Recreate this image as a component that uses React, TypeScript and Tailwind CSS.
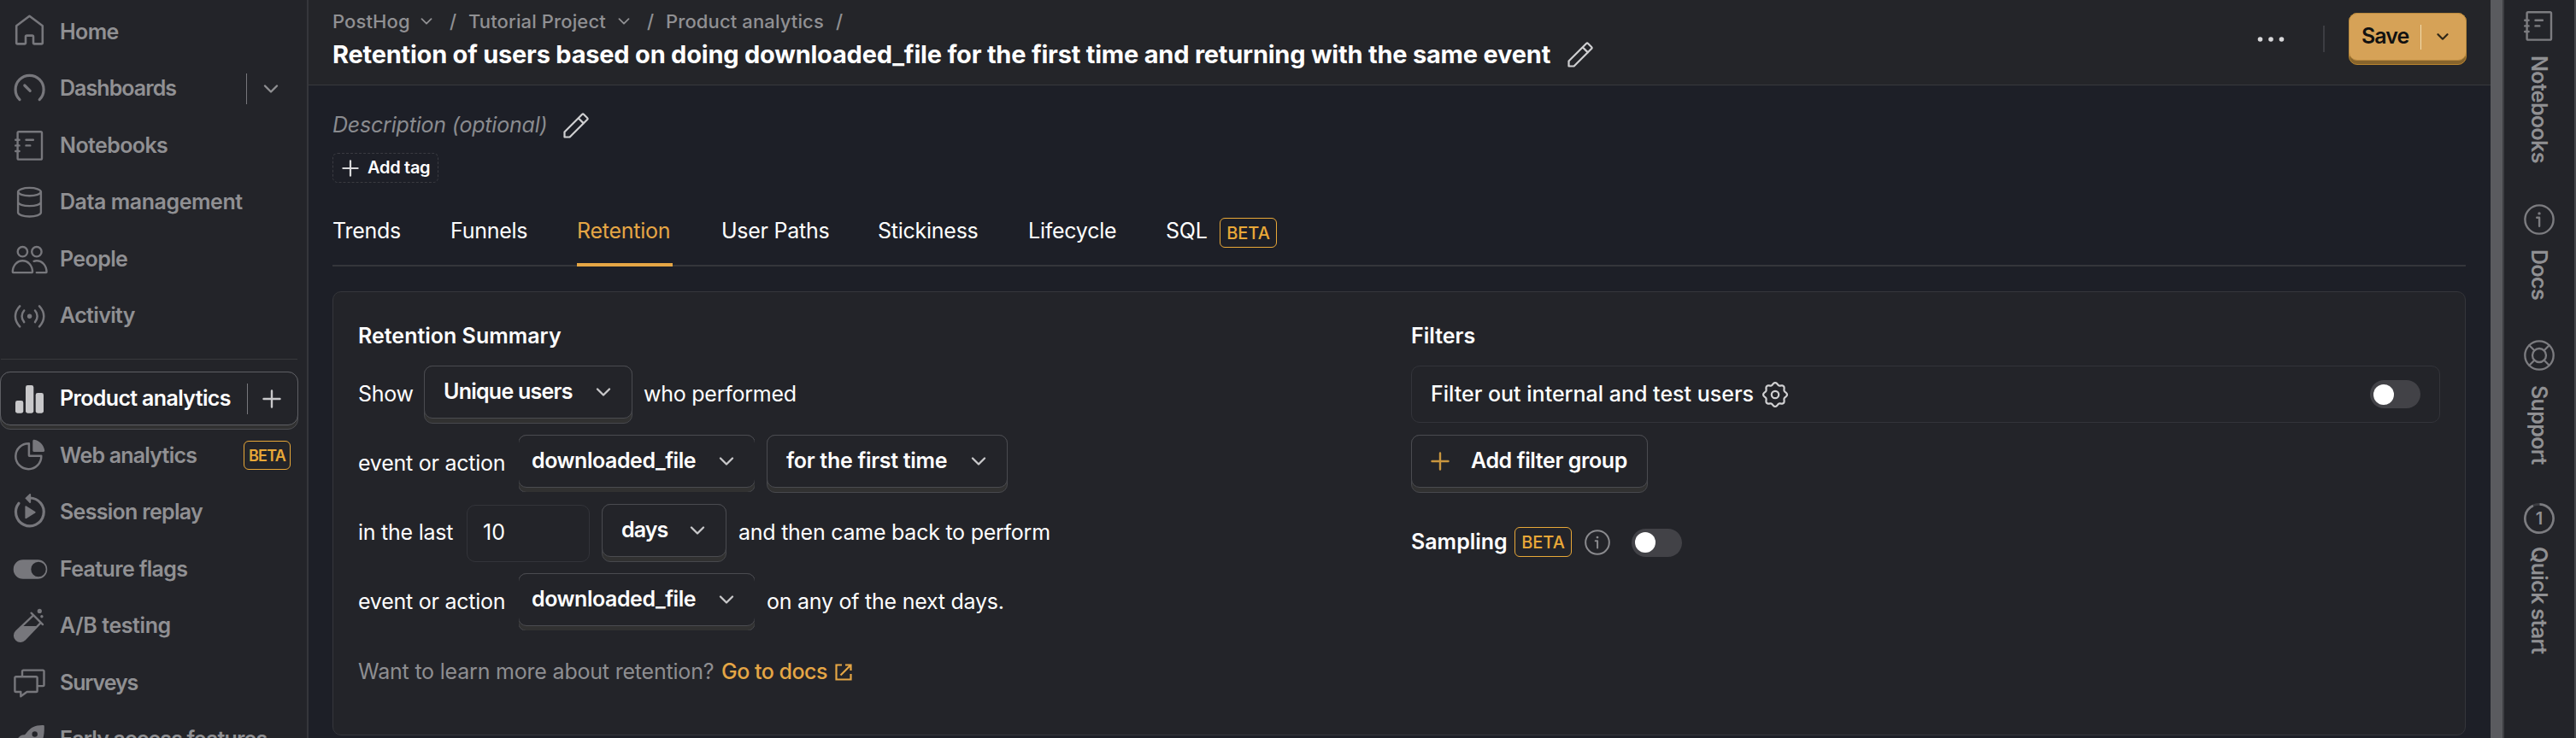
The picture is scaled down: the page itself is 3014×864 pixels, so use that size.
import React from 'react'

const NAV_ICON = 'h-[42px] w-[42px] shrink-0 overflow-visible'

function Svg({ children, className = NAV_ICON, w = 42, h = 42, sw = 2.6 }: { children: React.ReactNode; className?: string; w?: number; h?: number; sw?: number }) {
  return (
    <svg viewBox={`0 0 ${w} ${h}`} className={className} fill="none" stroke="currentColor" strokeWidth={sw} strokeLinecap="round" strokeLinejoin="round">
      {children}
    </svg>
  )
}

const HomeIcon = () => (
  <Svg><path d="M20.5 2.8 5.2 14.2V34a1.4 1.4 0 0 0 1.4 1.4h8a1.4 1.4 0 0 0 1.4-1.4v-7a1.4 1.4 0 0 1 1.4-1.4h6.2a1.4 1.4 0 0 1 1.4 1.4v7a1.4 1.4 0 0 0 1.4 1.4h8a1.4 1.4 0 0 0 1.4-1.4V14.2Z" /></Svg>
)
const GaugeIcon = () => (
  <Svg sw={3}><path d="M9 33.6a16.5 16.5 0 1 1 23.2 0M14.8 17l6.4 6.4" strokeWidth="3.2" /></Svg>
)
const NotebookIcon = () => (
  <Svg sw={2.4}>
    <rect x="6.6" y="5.2" width="28.4" height="32.4" rx="1.4" />
    <path d="M4.2 14.8h4.4M4.2 21.4h4.4M4.2 28h4.4M16.5 14.8h8.4M16.5 21.4h4.8" />
  </Svg>
)
const DatabaseIcon = () => (
  <Svg sw={2.4}>
    <ellipse cx="20.5" cy="8.6" rx="13.4" ry="4.7" />
    <path d="M7.1 8.6v24.2c0 2.6 6 4.7 13.4 4.7s13.4-2.1 13.4-4.7V8.6M7.1 20.6c0 2.600 6 4.500 13.400 4.500s13.400-1.900 13.400-4.500" />
  </Svg>
)
const PeopleIcon = () => (
  <Svg sw={2.4}>
    <circle cx="12.4" cy="12.7" r="5.7" />
    <circle cx="28.9" cy="12.7" r="5.7" />
    <path d="M.8 36.5C.8 28.8 6 23.2 12.4 23.2S24 28.8 24 36.5a.6.6 0 0 1-.6.6H1.400a.6.6 0 0 1-.6-.6ZM25.600 23.800c1-.4 2.100-.6 3.300-.6 6.400 0 11.600 5.600 11.600 13.300a.6.6 0 0 1-.6.6H28.800" />
  </Svg>
)
const ActivityIcon = () => (
  <Svg sw={2.5}>
    <circle cx="20.6" cy="21.3" r="2.7" fill="currentColor" stroke="none" />
    <path d="M14.2 14.5c-3.500 4-3.500 9.600 0 13.600M27 14.500c3.500 4 3.500 9.600 0 13.600M9.200 9.300c-7 7.300-7 16.700 0 24M32 9.300c7 7.300 7 16.700 0 24" />
  </Svg>
)
const BarsIcon = () => (
  <Svg>
    <g fill="currentColor" stroke="none">
      <rect x="4" y="23" width="9.3" height="14.7" rx="2.4" />
      <rect x="16" y="5" width="9.3" height="32.7" rx="2.4" />
      <rect x="27.7" y="14" width="9.3" height="23.7" rx="2.4" />
    </g>
  </Svg>
)
const PieIcon = () => (
  <Svg sw={2.5}>
    <path d="M19.9 7.2a15 15 0 1 0 14.400 14.600H20.700a.8.8 0 0 1-.8-.8Z" />
    <path d="M24.3 4.200c0-1 .7-1.700 1.700-1.500 6.200 1 11.200 6 12.200 12.500.1 1-.5 1.700-1.500 1.700H25.600a1.300 1.300 0 0 1-1.300-1.300Z" fill="currentColor" stroke="none" />
  </Svg>
)
const ReplayIcon = () => (
  <Svg sw={3.2}>
    <path d="M8 10.200a16.400 16.400 0 1 0 12.700-6.200" />
    <path d="M15.300 4.300 20.500-.8c.7-.5 1.600-.1 1.600.7v9.200c0 .8-.9 1.200-1.600.7Z" fill="currentColor" stroke="none" />
    <path d="M15.400 14.300v13c0 .8.8 1.200 1.500.8l10.300-6.500a1 1 0 0 0 0-1.600L16.900 13.500c-.7-.4-1.500 0-1.500.8Z" fill="currentColor" stroke="none" />
  </Svg>
)
const FlagIcon = () => (
  <Svg>
    <path d="M12.9 10.300h17.200a11.200 11.200 0 0 1 0 22.400H12.900a11.200 11.200 0 0 1 0-22.400ZM31 12.800a8.700 8.700 0 1 0 0 17.400 8.700 8.700 0 0 0 0-17.400Z" fill="currentColor" fillRule="evenodd" stroke="none" />
  </Svg>
)
const TubeIcon = () => (
  <Svg sw={2.4}>
    <path d="M22.600 5.700 36 19.100M25 8.300 5 27.300a6.700 6.700 0 0 0 9.800 9.400L33.700 17" />
    <path d="M10.500 21h20L15 36.800a6.700 6.700 0 0 1-10-9.500Z" fill="currentColor" stroke="none" />
    <circle cx="32.3" cy="3.4" r="2.6" fill="currentColor" stroke="none" />
    <circle cx="34.9" cy="9.8" r="1.7" fill="currentColor" stroke="none" />
  </Svg>
)
const SurveyIcon = () => (
  <Svg sw={2.4}>
    <path d="M4.700 14.200h23.600a1.300 1.300 0 0 1 1.300 1.300v15.200a1.300 1.300 0 0 1-1.300 1.300H17.500l-7.200 5.200V32H4.700a1.300 1.300 0 0 1-1.300-1.300V15.500a1.300 1.300 0 0 1 1.300-1.300Z" />
    <path d="M12 13.800V7.900a1.300 1.300 0 0 1 1.300-1.300h22.900a1.300 1.300 0 0 1 1.300 1.300v15.900a1.300 1.300 0 0 1-1.300 1.300H30" />
  </Svg>
)
const RocketIcon = () => (
  <Svg>
    <path d="M36.500 4c-9.500-.2-15 3-19.500 9l-2 2.300c-4.500-.3-7 2-9.500 6.200l8 1.500 8 8 1.500 8c5-3 6.500-6 6-9.500l2.300-2C37 23 38 14 37.800 5.300 37.800 4.500 37.300 4 36.500 4ZM26.700 11.300a3.200 3.200 0 1 1 0 6.400 3.200 3.200 0 0 1 0-6.400Z" fill="currentColor" fillRule="evenodd" stroke="none" />
  </Svg>
)

function Chevron({ className = 'text-[#c9c9cb]' }: { className?: string }) {
  return (
    <Svg w={18} h={10} sw={2.3} className={'h-[10px] w-[18px] shrink-0 ' + className}>
      <path d="m2 1.500 7 7 7-7" />
    </Svg>
  )
}
function SmallChevron({ className = '' }: { className?: string }) {
  return (
    <Svg w={14} h={8} sw={1.8} className={'h-[8px] w-[14px] shrink-0 ' + className}>
      <path d="m1.500 1.200 5.500 5.500 5.500-5.500" />
    </Svg>
  )
}
function Plus({ className }: { className: string }) {
  return (
    <Svg w={22} h={22} sw={2.4} className={'shrink-0 ' + className}>
      <path d="M11 1.500v19M1.500 11h19" />
    </Svg>
  )
}
function Pencil() {
  return (
    <Svg w={30} h={30} sw={2.2} className="h-[30px] w-[30px] shrink-0 text-[#cfcfd1]">
      <path d="M1.500 22.500 22 2a1.500 1.500 0 0 1 2.100 0l4 4a1.500 1.500 0 0 1 0 2.100L7.600 28.500H1.500ZM17.700 6.300l6.100 6.100" />
    </Svg>
  )
}
function InfoIcon({ className }: { className: string }) {
  return (
    <Svg w={36} h={36} sw={2.4} className={'shrink-0 ' + className}>
      <circle cx="18" cy="18" r="16.6" />
      <path d="M15.200 15.800h2.900v10" />
      <circle cx="18" cy="10.900" r="1.7" fill="currentColor" stroke="none" />
    </Svg>
  )
}

// Outline of an eight-toothed gear, sampled around its centre.
const GEAR_OUTLINE = Array.from({ length: 96 }, (_, i) => {
  const a = (i / 96) * Math.PI * 2
  const r = 12.7 + 1.25 * Math.cos(8 * a)
  return `${(15 + r * Math.sin(a)).toFixed(2)},${(15 - r * Math.cos(a)).toFixed(2)}`
}).join(' ')

function GearIcon() {
  return (
    <Svg w={30} h={30} sw={2.2} className="h-[30px] w-[30px] shrink-0 text-[#d0d0d2]">
      <circle cx="15" cy="15" r="4.2" />
      <polygon points={GEAR_OUTLINE} />
    </Svg>
  )
}

function Beta({ className }: { className: string }) {
  return (
    <span className={'flex shrink-0 items-center justify-center rounded-[6px] border border-[#e9a838] text-[#e9a838] ' + className}>BETA</span>
  )
}

function NavItem({ icon, label, tracking }: { icon: React.ReactNode; label: string; tracking: string }) {
  return (
    <>
      {icon}
      <span className={'ml-[14px] whitespace-nowrap text-[25px] font-semibold text-[#909093] ' + tracking}>{label}</span>
    </>
  )
}
const NAV_ROW = 'flex h-[66.5px] shrink-0 items-center pl-[14px] text-[#77777c]'

function Button({ children, className }: { children: React.ReactNode; className: string }) {
  return (
    <div className={'h-[68px] shrink-0 rounded-[10px] border border-[#47484d] bg-[#313131] ' + className}>
      <div className="-mx-px -mt-px flex h-[62px] items-center rounded-[10px] border border-[#4a4b50] bg-[#232429] text-[25px] font-semibold whitespace-nowrap text-white">
        {children}
      </div>
    </div>
  )
}
function EventPicker() {
  return (
    <div className="h-[67px] w-[276px] shrink-0 self-start overflow-hidden">
      <Button className="-mx-px w-[278px]">
        <span className="ml-[15px] w-[219px] tracking-[-0.45px]">downloaded_file</span>
        <Chevron />
      </Button>
    </div>
  )
}
function Toggle() {
  return (
    <div className="flex h-[33px] w-[59px] shrink-0 items-center rounded-full bg-[#424247] pl-1">
      <div className="size-6 rounded-full bg-white" />
    </div>
  )
}

const T = 'shrink-0 whitespace-nowrap text-[25px] tracking-[-0.25px] text-white '
const SIDE = 'text-[25px] leading-[30px] font-semibold tracking-[-0.65px] whitespace-nowrap [writing-mode:vertical-rl] '

export default function App() {
  return (
    <div className="flex h-[864px] w-[3014px] overflow-hidden bg-[#1d1f27] font-['Inter',sans-serif]">
      <aside className="flex h-full w-[361px] shrink-0 flex-col overflow-hidden border-r-2 border-[#35363b] bg-[#232429] pt-[4px]">
        <div className={NAV_ROW}><NavItem icon={<HomeIcon />} label="Home" tracking="tracking-[-0.6px]" /></div>
        <div className={NAV_ROW}>
          <NavItem icon={<GaugeIcon />} label="Dashboards" tracking="tracking-[-0.95px]" />
          <div className="ml-auto h-9 w-px bg-[#77777c]" />
          <Chevron className="mr-[33px] ml-[19px] text-[#909093]" />
        </div>
        <div className={NAV_ROW}><NavItem icon={<NotebookIcon />} label="Notebooks" tracking="tracking-[-0.6px]" /></div>
        <div className={NAV_ROW}><NavItem icon={<DatabaseIcon />} label="Data management" tracking="tracking-[-0.45px]" /></div>
        <div className={NAV_ROW}><NavItem icon={<PeopleIcon />} label="People" tracking="tracking-[-0.6px]" /></div>
        <div className={NAV_ROW}><NavItem icon={<ActivityIcon />} label="Activity" tracking="tracking-[-0.65px]" /></div>
        <div className="mt-[17px] ml-px h-px w-[347px] shrink-0 bg-[#38393d]" />
        <div className="mt-[14px] h-[68px] w-[349px] shrink-0 rounded-[12px] border border-[#4c4d52] bg-[#313131]">
          <div className="-mx-px -mt-px flex h-[63px] items-center rounded-[12px] border border-[#5e5f64] bg-[#232429] pl-[13px] text-[#c8c8ca]">
            <BarsIcon />
            <span className="ml-[14px] text-[25px] font-semibold tracking-[-0.65px] whitespace-nowrap text-white">Product analytics</span>
            <div className="ml-auto h-9 w-px bg-[#77777c]" />
            <Plus className="mr-[19px] ml-[17px] h-[22px] w-[22px]" />
          </div>
        </div>
        <div className={NAV_ROW + ' -mt-[3px]'}>
          <NavItem icon={<PieIcon />} label="Web analytics" tracking="tracking-[-0.8px]" />
          <Beta className="mr-[19px] ml-auto h-[34px] w-[55px] text-[18px] font-semibold tracking-[-0.8px]" />
        </div>
        <div className={NAV_ROW}><NavItem icon={<ReplayIcon />} label="Session replay" tracking="tracking-[-0.7px]" /></div>
        <div className={NAV_ROW}><NavItem icon={<FlagIcon />} label="Feature flags" tracking="tracking-[-0.65px]" /></div>
        <div className={NAV_ROW}><NavItem icon={<TubeIcon />} label="A/B testing" tracking="tracking-[-0.4px]" /></div>
        <div className={NAV_ROW}><NavItem icon={<SurveyIcon />} label="Surveys" tracking="tracking-[-1.1px]" /></div>
        <div className={NAV_ROW}><NavItem icon={<RocketIcon />} label="Early access features" tracking="tracking-[-0.85px]" /></div>
      </aside>

      <main className="flex h-full w-[2553px] shrink-0 flex-col">
        <header className="flex h-[100px] shrink-0 border-b border-[#38393d] bg-[#242529] pr-[28px] pl-[28px]">
          <div className="flex flex-col">
            <div className="mt-[10px] flex h-[30px] items-center text-[22px] leading-[30px] font-medium tracking-[0.12px] whitespace-nowrap text-[#909093]">
              <span className="w-[103px]">PostHog</span>
              <SmallChevron />
              <span className="ml-[20px] w-[22px]">/</span>
              <span className="w-[175px]">Tutorial Project</span>
              <SmallChevron />
              <span className="ml-[20px] w-[22px]">/</span>
              <span className="w-[199px]">Product analytics</span>
              <span>/</span>
            </div>
            <div className="flex h-[48px] items-center">
              <h1 className="w-[1445px] text-[29px] font-bold tracking-[-0.22px] whitespace-nowrap text-white">
                Retention of users based on doing downloaded_file for the first time and returning with the same event
              </h1>
              <Pencil />
            </div>
          </div>
          <div className="ml-auto flex h-[91px] items-center">
            <svg viewBox="0 0 32 6" className="h-[6px] w-[32px]" fill="#d8d8da">
              <circle cx="3.5" cy="3" r="2.8" /><circle cx="16" cy="3" r="2.8" /><circle cx="28.5" cy="3" r="2.8" />
            </svg>
            <div className="mr-[28px] ml-[45px] h-[31px] w-[2px] bg-[#3c3d42]" />
            <div className="h-[61px] w-[138px] rounded-[10px] border border-[#b8842f] bg-[#87642c]">
              <div className="-mx-px -mt-px flex h-[56px] items-center rounded-[10px] border border-[#b98a3f] bg-[#d6a257] pl-[14px] text-[25px] font-semibold text-[#111111]">
                <span className="w-[69px] tracking-[-1px]">Save</span>
                <div className="h-[29px] w-px bg-[#f0dcae]" />
                <SmallChevron className="ml-[18px] stroke-[2.2px] text-[#2f2718]" />
              </div>
            </div>
          </div>
        </header>

        <div className="flex flex-1 flex-col pr-[29px] pl-[28px]">
          <div className="mt-[31px] flex h-[32px] shrink-0 items-center">
            <span className="w-[270px] text-[25px] tracking-[-0.2px] whitespace-nowrap text-[#8a8b8f] italic">Description (optional)</span>
            <Pencil />
          </div>
          <div className="mt-[16px] flex h-[35px] w-[124px] shrink-0 items-center rounded-[6px] border border-dashed border-[#3a3b41] pl-[10px]">
            <Plus className="h-[20px] w-[20px] text-[#d8d8da]" />
            <span className="mb-px ml-[10px] text-[20px] font-semibold tracking-[-0.3px] whitespace-nowrap text-white">Add tag</span>
          </div>
          <nav className="mt-[14px] flex h-[84px] shrink-0 items-start border-b-2 border-[#35363b] text-[25px] tracking-[-0.25px] whitespace-nowrap text-white">
            <span className="mt-[24px] w-[138px]">Trends</span>
            <span className="mt-[24px] w-[148px]">Funnels</span>
            <span className="mr-[57px] h-[84px] w-[112px] shrink-0 border-b-4 border-[#e5a645] pt-[24px] text-[#e5a645]">Retention</span>
            <span className="mt-[24px] w-[183px]">User Paths</span>
            <span className="mt-[24px] w-[176px]">Stickiness</span>
            <span className="mt-[24px] w-[161px]">Lifecycle</span>
            <span className="mt-[24px] w-[63px]">SQL</span>
            <Beta className="mt-[27px] h-[35px] w-[67px] text-[20px] font-medium tracking-normal" />
          </nav>
          <section className="mt-[29px] flex h-[520px] w-[2496px] shrink-0 rounded-[10px] border border-[#35363b] bg-[#232429] pl-[29px]">
            <div className="flex w-[1232px] flex-col">
              <h2 className="mt-[35px] h-[33px] text-[25px] leading-[32px] font-semibold text-white">Retention Summary</h2>
              <div className="mt-[18px] flex h-[68px] items-center">
                <span className={T + 'w-[77px]'}>Show</span>
                <Button className="w-[244px]">
                  <span className="ml-[22px] w-[178px] tracking-[-0.75px]">Unique users</span>
                  <Chevron />
                </Button>
                <span className={T + 'ml-[13px]'}>who performed</span>
              </div>
              <div className="mt-[13px] flex h-[68px] items-center">
                <span className={T + 'w-[188px]'}>event or action</span>
                <EventPicker />
                <Button className="ml-[14px] w-[282px]">
                  <span className="ml-[22px] w-[216px] tracking-[-0.3px]">for the first time</span>
                  <Chevron />
                </Button>
              </div>
              <div className="mt-[13px] flex h-[68px] items-center">
                <span className={T + 'w-[127px]'}>in the last</span>
                <div className="flex h-[67px] w-[144px] shrink-0 items-center rounded-[10px] border border-[#33343a] pl-[18px] text-[25px] text-white">10</div>
                <Button className="ml-[14px] w-[146px]">
                  <span className="ml-[22px] w-[80px] tracking-[-0.9px]">days</span>
                  <Chevron />
                </Button>
                <span className={T + 'ml-[14px]'}>and then came back to perform</span>
              </div>
              <div className="mt-[13px] flex h-[68px] items-center">
                <span className={T + 'w-[188px]'}>event or action</span>
                <EventPicker />
                <span className={T + 'ml-[14px]'}>on any of the next days.</span>
              </div>
              <div className="mt-[31px] flex h-[34px] items-center text-[25px] whitespace-nowrap text-[#8e8e91]">
                <span className="w-[425px] tracking-[-0.2px]">Want to learn more about retention?</span>
                <span className="w-[133px] font-medium tracking-[-0.5px] text-[#e5a645]">Go to docs</span>
                <Svg w={20} h={20} sw={2.2} className="h-[20px] w-[20px] text-[#e5a645]">
                  <path d="M8 1.500H1.500v17h17V12M12 1.500h6.500V8M18 2 6.500 13.500" strokeLinecap="butt" strokeLinejoin="miter" />
                </Svg>
              </div>
            </div>

            <div className="flex w-[1204px] flex-col">
              <h2 className="mt-[35px] h-[33px] text-[25px] leading-[32px] font-semibold text-white">Filters</h2>
              <div className="mt-[18px] flex h-[67px] shrink-0 items-center rounded-[10px] border border-[#33343a] pr-[22px] pl-[22px]">
                <span className="w-[388px] text-[25px] font-medium whitespace-nowrap text-white">Filter out internal and test users</span>
                <GearIcon />
                <div className="ml-auto"><Toggle /></div>
              </div>
              <Button className="mt-[14px] w-[277px]">
                <Plus className="ml-[22px] h-[22px] w-[22px] text-[#c9963f]" />
                <span className="ml-[25px] tracking-[-0.4px]">Add filter group</span>
              </Button>
              <div className="mt-[39px] flex h-[38px] items-center">
                <span className="w-[121px] text-[25px] font-semibold text-white">Sampling</span>
                <Beta className="mb-px h-[35px] w-[67px] text-[20px] font-medium" />
                <InfoIcon className="mr-[25px] ml-[15px] h-[30px] w-[30px] text-[#8a8a8e]" />
                <Toggle />
              </div>
            </div>
          </section>
        </div>
      </main>

      <div className="h-full w-[14px] shrink-0 bg-[#5a5b5f]" />
      <aside className="flex h-full w-[86px] shrink-0 flex-col items-center border-r-2 border-l-2 border-r-[#47484c] border-l-[#3d3e42] bg-[#232429] text-[#7c7c80]">
        <div className="mt-[9px] shrink-0"><NotebookIcon /></div>
        <span className={SIDE + 'mt-[14px] h-[174px] text-[#909093]'}>Notebooks</span>
        <InfoIcon className="h-[36px] w-[36px]" />
        <span className={SIDE + 'mt-[17px] h-[106px] text-[#909093]'}>Docs</span>
        <Svg w={36} h={36} sw={2.3} className="h-[36px] w-[36px] shrink-0">
          <circle cx="18" cy="18" r="16.7" />
          <circle cx="18" cy="18" r="8" />
          <path d="m6.300 6.300 6 6M29.700 6.300l-6 6M6.300 29.700l6-6M29.700 29.700l-6-6" />
        </Svg>
        <span className={SIDE + 'mt-[17px] h-[138px] text-[#909093]'}>Support</span>
        <div className="grid h-[36px] w-[36px] shrink-0 place-items-center">
          <Svg w={36} h={36} sw={2.6} className="col-start-1 row-start-1 h-[36px] w-[36px]">
            <circle cx="18" cy="18" r="16.6" stroke="#3c3d42" />
            <path d="M18.500 1.400A16.600 16.600 0 1 1 10.800 3" strokeLinecap="butt" />
          </Svg>
          <span className="col-start-1 row-start-1 text-[20px] leading-none font-semibold text-[#909093]">1</span>
        </div>
        <span className={SIDE + 'mt-[15px] text-[#909093]'}>Quick start</span>
      </aside>
    </div>
  )
}
